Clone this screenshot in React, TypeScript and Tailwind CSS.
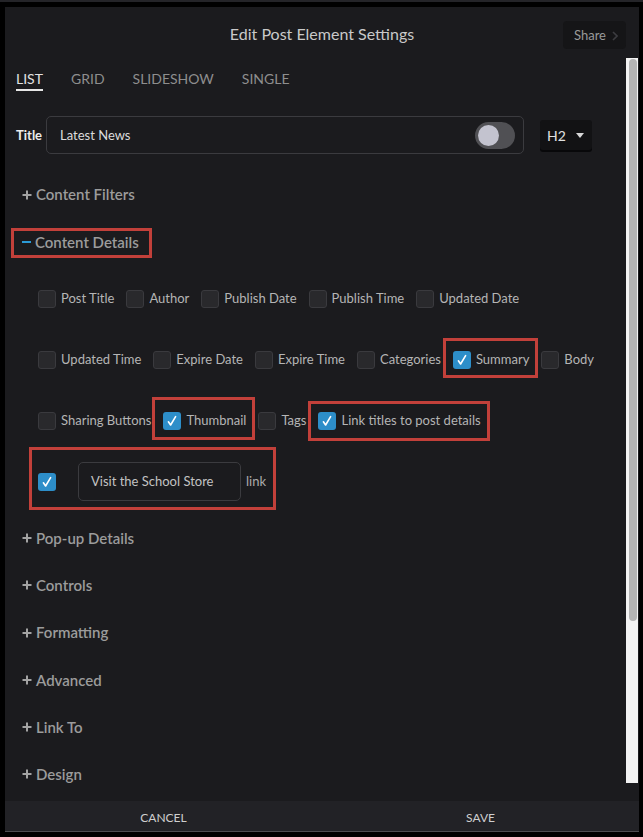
import React from "react";

const FONT = "font-['Lato','Open_Sans',sans-serif]";

type Item = { label: string; checked?: boolean; box?: string };

const rows: Item[][] = [
  [
    { label: "Post Title" },
    { label: "Author" },
    { label: "Publish Date" },
    { label: "Publish Time" },
    { label: "Updated Date" },
  ],
  [
    { label: "Updated Time" },
    { label: "Expire Date" },
    { label: "Expire Time" },
    { label: "Categories" },
    { label: "Summary", checked: true, box: "-top-[12px] -bottom-[8px] -left-[10px] -right-[9px]" },
    { label: "Body" },
  ],
  [
    { label: "Sharing Buttons" },
    { label: "Thumbnail", checked: true, box: "-top-[14px] -bottom-[9px] -left-[11px] -right-[9px]" },
    { label: "Tags" },
    { label: "Link titles to post details", checked: true, box: "-top-[10px] -bottom-[10px] -left-[10px] -right-[9px]" },
  ],
];

const sections = ["Pop-up Details", "Controls", "Formatting", "Advanced", "Link To", "Design"];

function Check({ checked }: { checked?: boolean }) {
  if (checked) {
    return (
      <span className="flex h-[18px] w-[18px] shrink-0 items-center justify-center rounded-[3px] bg-[#2d8ec9]">
        <svg width="12" height="12" viewBox="0 0 12 12" fill="none">
          <path d="M2.4 6.8 L4.6 10 L9.6 1.6" stroke="white" strokeWidth="1.6" strokeLinecap="round" strokeLinejoin="round" />
        </svg>
      </span>
    );
  }
  return <span className="h-[18px] w-[18px] shrink-0 rounded-[3px] border border-[#3a3a3e] bg-[#29292c]" />;
}

function Plus() {
  return (
    <svg width="10" height="10" viewBox="0 0 10 10" className="shrink-0">
      <path d="M5 0.5 V9.5 M0.5 5 H9.5" stroke="#a3a3a3" strokeWidth="2" />
    </svg>
  );
}

function Heading({ label }: { label: string }) {
  return (
    <div className="flex h-[47.3px] items-center gap-[4px] pl-[6px]">
      <Plus />
      <span className="text-[15px] font-semibold text-[#9c9c9c]">{label}</span>
    </div>
  );
}

export default function App() {
  return (
    <div className={`h-[837px] w-[643px] overflow-hidden bg-black ${FONT}`}>
      <div className="h-[2px] bg-[#242428]" />
      <div className="ml-[5px] mt-[5px] flex h-[825px] w-[634px] flex-col bg-[#1b1b1e]">
        {/* header */}
        <div className="grid h-[51px] shrink-0 grid-cols-[1fr_auto_1fr] items-start">
          <div />
          <div className="pt-[17px] text-[16px] leading-[20px] text-[#c9c9c9]">Edit Post Element Settings</div>
          <div className="flex justify-end pr-[13px] pt-[14px]">
            <div className="flex h-[28px] items-center gap-[6px] rounded-[4px] bg-[#151517] pl-[11px] pr-[8px] pt-[1px] text-[13px] text-[#9a9a9a]">
              Share
              <svg width="6" height="10" viewBox="0 0 6 10" fill="none">
                <path d="M1 1 L5 5 L1 9" stroke="#3c3c40" strokeWidth="1.6" />
              </svg>
            </div>
          </div>
        </div>

        {/* body */}
        <div className="flex h-[725px] shrink-0">
          <div className="flex-1 overflow-hidden pl-[11px]">
            {/* tabs */}
            <div className="flex gap-[28px] pt-[12px] text-[14px] leading-[18px]">
              <div className="flex flex-col">
                <span className="text-[#e2e2e2]">LIST</span>
                <span className="mt-[1px] h-[2px] bg-[#e6e6e6]" />
              </div>
              <span className="text-[#8e8e8e]">GRID</span>
              <span className="text-[#8e8e8e]">SLIDESHOW</span>
              <span className="text-[#8e8e8e]">SINGLE</span>
            </div>

            {/* title row */}
            <div className="mt-[25px] flex h-[38px] items-center">
              <span className="w-[30px] pt-[2px] text-[13px] font-bold text-[#ececec]">Title</span>
              <div className="flex h-[38px] w-[478px] items-center justify-between rounded-[5px] border border-[#3b3b3f] pl-[13px] pr-[8px]">
                <span className="pt-[2px] text-[13px] text-[#dcdcdc]">Latest News</span>
                <div className="flex h-[27px] w-[40px] items-center rounded-full bg-[#505054] pl-[3px]">
                  <span className="h-[21px] w-[21px] rounded-full bg-[#c3c3cf]" />
                </div>
              </div>
              <div className="ml-[16px] flex h-[30px] w-[52px] items-center gap-[10px] rounded-[3px] bg-[#121214] pl-[7px] shadow-[0_2px_0_#08080a]">
                <span className="text-[14px] text-[#e0e0e0]">H2</span>
                <svg width="8" height="5" viewBox="0 0 8 5">
                  <path d="M0 0 H8 L4 5 Z" fill="#d8d8d8" />
                </svg>
              </div>
            </div>

            {/* sections */}
            <div className="mt-[17px]">
              <Heading label="Content Filters" />
              <div className="flex h-[47px] items-center pl-[6px]">
                <div className="relative flex h-[20px] items-center gap-[4px]">
                  <span className="h-[2.5px] w-[9px] bg-[#2b9ad6]" />
                  <span className="text-[15px] font-semibold leading-[20px] text-[#9c9c9c]">Content Details</span>
                  <span className="absolute -bottom-[6px] -left-[11px] -right-[13px] -top-[4px] border-[3px] border-[#c2403a]" />
                </div>
              </div>

              <div className="mb-[2px] mt-[3px] pl-[22px]">
                {rows.map((row, i) => (
                  <div key={i} className="flex h-[61px] items-center gap-[12px]">
                    {row.map((it) => (
                      <div key={it.label} className="relative flex h-[20px] items-center gap-[5px]">
                        <Check checked={it.checked} />
                        <span className="whitespace-nowrap text-[13px] text-[#b5b5b5]">{it.label}</span>
                        {it.box && <span className={`absolute border-[3px] border-[#c2403a] ${it.box}`} />}
                      </div>
                    ))}
                  </div>
                ))}
                <div className="flex h-[61px] items-center">
                  <div className="relative flex items-center">
                    <Check checked />
                    <div className="ml-[22px] flex h-[39px] w-[163px] items-center rounded-[5px] border border-[#3b3b3f] pl-[12px] text-[13px] text-[#c3c3c3]">
                      Visit the School Store
                    </div>
                    <span className="ml-[5px] text-[13px] text-[#ababab]">link</span>
                    <span className="absolute -bottom-[9px] -left-[9px] -right-[10px] -top-[15px] border-[3px] border-[#c2403a]" />
                  </div>
                </div>
              </div>

              {sections.map((s) => (
                <Heading key={s} label={s} />
              ))}
            </div>
          </div>

          {/* scrollbar */}
          <div className="mr-[1px] w-[12px] shrink-0 bg-[#f3f3f3] pl-[3px] pt-[1px]">
            <div className="h-[562px] w-[8px] rounded-full bg-[#b4b4b4]" />
          </div>
        </div>

        <div className="h-[18px] shrink-0" />

        {/* footer */}
        <div className="grid h-[30px] shrink-0 grid-cols-2 items-center bg-[#222226] pt-[4px] text-[12px] text-[#cfcfcf]">
          <span className="text-center">CANCEL</span>
          <span className="text-center">SAVE</span>
        </div>
        <div className="h-[1px] shrink-0 bg-[#4c4c50]" />
      </div>
    </div>
  );
}
